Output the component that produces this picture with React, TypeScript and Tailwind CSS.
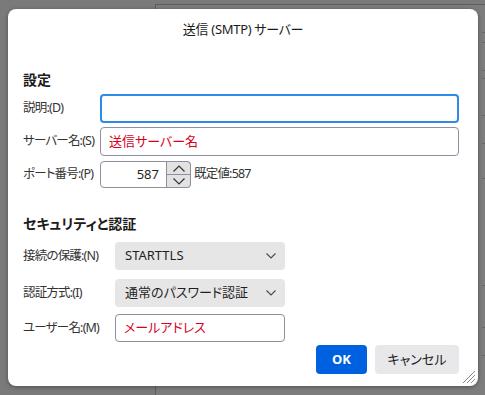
import React from "react";

const font = "[font-family:'Noto_Sans','Noto_Sans_CJK_JP',sans-serif] [font-feature-settings:'palt']";

function Chevron() {
  return (
    <svg width="10" height="6" viewBox="0 0 10 6" fill="none" stroke="#4a4a4a" strokeWidth="1.1">
      <path d="M0.5 0.5 L5 5 L9.5 0.5" />
    </svg>
  );
}

function Select({ value }: { value: string }) {
  return (
    <div className="w-[170px] h-[28px] bg-[#e6e6e6] rounded-[4px] flex items-center justify-between pl-[10px] pr-[9px] text-[13px] text-[#1f1f1f]">
      <span>{value}</span>
      <Chevron />
    </div>
  );
}

const label = "shrink-0 whitespace-nowrap text-[12.5px] tracking-[-0.8px] text-[#333]";

export default function App() {
  return (
    <div className={`relative w-[485px] h-[395px] bg-[#7a7a7a] overflow-hidden ${font}`}>
      {/* background window behind */}
      <div className="absolute left-[155px] top-[4px] w-[340px] h-[400px] border border-[#5e5e5e] bg-[#7d7d7d]">
        <div className="absolute right-0 w-[12px] top-[27px] h-px bg-[#666]" />
        <div className="absolute right-0 w-[12px] top-[37px] h-px bg-[#666]" />
        <div className="absolute right-0 w-[12px] top-[65px] h-px bg-[#666]" />
        <div className="absolute right-0 w-[12px] top-[73px] h-px bg-[#666]" />
        <div className="absolute right-0 w-[12px] top-[110px] h-px bg-[#666]" />
        <div className="absolute right-0 w-[12px] top-[138px] h-px bg-[#666]" />
        <div className="absolute right-0 w-[12px] top-[173px] h-px bg-[#666]" />
        <div className="absolute right-0 w-[12px] top-[280px] h-px bg-[#666]" />
        <div className="absolute right-0 w-[12px] top-[322px] h-px bg-[#666]" />
        <div className="absolute right-0 w-[12px] top-[350px] h-px bg-[#666]" />
      </div>

      {/* dialog */}
      <div className="absolute left-[8px] top-[9px] w-[470px] h-[377px] bg-white rounded-[8px] shadow-[0_1px_4px_rgba(0,0,0,0.35)] flex flex-col pl-[15px] pr-[19px]">
        <div className="h-[42px] flex items-center justify-center text-[13px] tracking-[-0.3px] text-[#1b1b1b] pl-[4px]">
          送信 (SMTP) サーバー
        </div>

        <div className="mt-[20px] leading-[18px] text-[14px] font-semibold text-[#1b1b1b]">設定</div>

        <div className="mt-[5px] h-[29px] flex items-center">
          <span className={`w-[77px] ${label}`}>説明:(D)</span>
          <div className="flex-1 h-full rounded-[4px] border-2 border-[#2b8be6]" />
        </div>

        <div className="mt-[4px] h-[29px] flex items-center">
          <span className={`w-[77px] ${label}`}>サーバー名:(S)</span>
          <div className="flex-1 h-full rounded-[4px] border border-[#8f8f9d] flex items-center pl-[8px] text-[13px] text-[#d70022]">
            送信サーバー名
          </div>
        </div>

        <div className="mt-[5px] h-[27px] flex items-center">
          <span className={`w-[77px] ${label}`}>ポート番号:(P)</span>
          <div className="shrink-0 w-[91px] h-full rounded-[4px] border border-[#8f8f9d] flex items-stretch">
            <div className="flex-1 flex items-center justify-end pr-[7px] text-[13px] text-[#1f1f1f]">587</div>
            <div className="w-[25px] my-[-1px] mr-[-1px] border border-[#8f8f9d] rounded-r-[4px] bg-[#e2e2e2] flex flex-col">
              <div className="flex-1 flex items-center justify-center border-b border-[#8f8f9d]">
                <svg width="12" height="7" viewBox="0 0 12 7" fill="none" stroke="#333" strokeWidth="1.2">
                  <path d="M0.5 6.5 L6 1 L11.5 6.5" />
                </svg>
              </div>
              <div className="flex-1 flex items-center justify-center">
                <svg width="12" height="7" viewBox="0 0 12 7" fill="none" stroke="#333" strokeWidth="1.2">
                  <path d="M0.5 0.5 L6 6 L11.5 0.5" />
                </svg>
              </div>
            </div>
          </div>
          <span className={`ml-[3px] ${label}`}>既定値:587</span>
        </div>

        <div className="mt-[27px] leading-[18px] text-[14px] font-semibold text-[#1b1b1b]">セキュリティと認証</div>

        <div className="mt-[9px] h-[28px] flex items-center">
          <span className={`w-[92px] ${label}`}>接続の保護:(N)</span>
          <Select value="STARTTLS" />
        </div>

        <div className="mt-[9px] h-[28px] flex items-center">
          <span className={`w-[92px] ${label}`}>認証方式:(I)</span>
          <Select value="通常のパスワード認証" />
        </div>

        <div className="mt-[7px] h-[28px] flex items-center">
          <span className={`w-[92px] ${label}`}>ユーザー名:(M)</span>
          <div className="w-[170px] h-full rounded-[4px] border border-[#8f8f9d] flex items-center pl-[8px] text-[13px] text-[#d70022]">
            メールアドレス
          </div>
        </div>

        <div className="mt-[3px] h-[29px] flex justify-end gap-[8px]">
          <div className="w-[51px] h-full rounded-[4px] bg-[#0061e0] text-white text-[13px] font-bold flex items-center justify-center">
            OK
          </div>
          <div className="w-[84px] h-full rounded-[4px] bg-[#e8e8ea] text-[#1b1b1b] text-[13px] flex items-center justify-center">
            キャンセル
          </div>
        </div>

        <svg className="absolute right-[2px] bottom-[2px]" width="14" height="14" viewBox="0 0 14 14" stroke="#8a8a8a" strokeWidth="1">
          <path d="M13 1 L1 13 M13 5 L5 13 M13 9 L9 13" />
        </svg>
      </div>
    </div>
  );
}
